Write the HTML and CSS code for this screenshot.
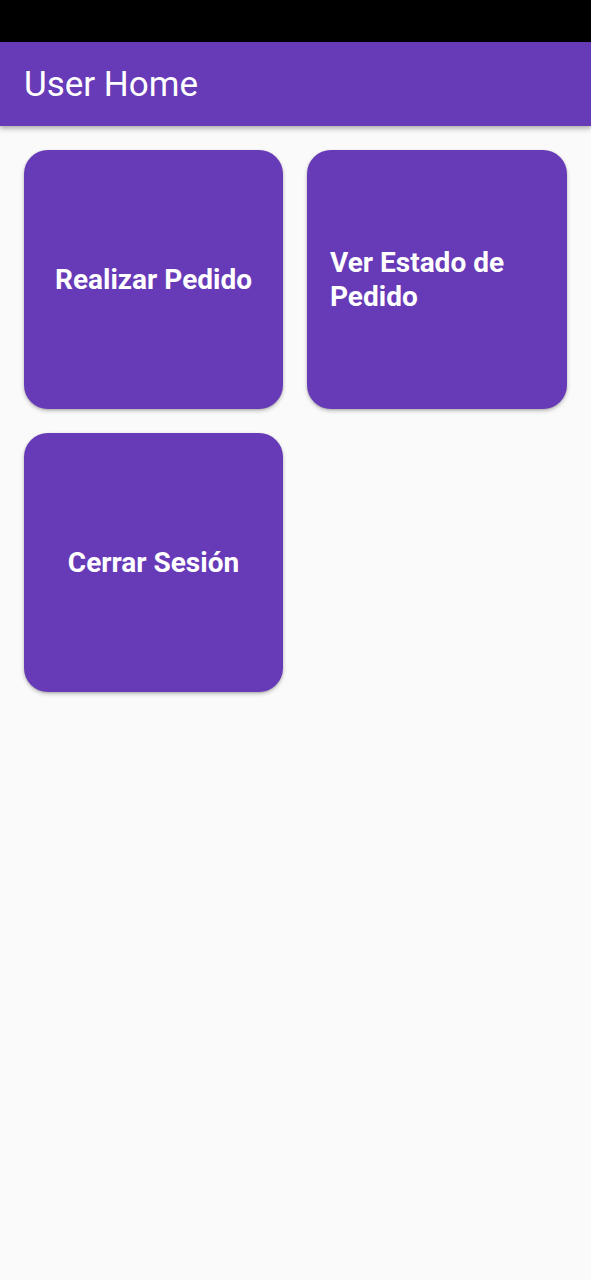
FILE: index.html
```html
<!DOCTYPE html>
<html lang="es">
<head>
<meta charset="utf-8">
<title>User Home</title>
<link rel="stylesheet" href="styles.css">
</head>
<body>
<div class="status-bar"></div>
<header class="app-bar">
  <h1 class="app-title">User Home</h1>
</header>
<main class="grid">
  <div class="card"><span class="card-label">Realizar Pedido</span></div>
  <div class="card"><span class="card-label">Ver Estado de Pedido</span></div>
  <div class="card"><span class="card-label">Cerrar Sesión</span></div>
</main>
</body>
</html>
```
FILE: styles.css
```css
* { box-sizing: border-box; }
html, body {
  margin: 0;
  padding: 0;
  background: #fafafa;
  font-family: Roboto, "Noto Sans", sans-serif;
}
.status-bar {
  height: 42px;
  background: #000;
}
.app-bar {
  height: 84px;
  background: #673ab7;
  display: flex;
  align-items: center;
  padding: 0 24px;
  box-shadow: 0 2px 4px rgba(0,0,0,0.2), 0 4px 5px rgba(0,0,0,0.12);
  position: relative;
  z-index: 1;
}
.app-title {
  margin: 0;
  color: #fff;
  font-size: 35px;
  font-weight: 400;
  line-height: 1;
}
.grid {
  display: grid;
  grid-template-columns: 259px 260px;
  column-gap: 24px;
  row-gap: 24px;
  padding: 24px 24px;
}
.card {
  height: 259px;
  background: #673ab7;
  border-radius: 24px;
  box-shadow: 0 2px 4px rgba(0,0,0,0.22), 0 1px 2px rgba(0,0,0,0.14);
  display: flex;
  align-items: center;
  justify-content: center;
  padding: 0 23px;
}
.card-label {
  color: #fff;
  font-size: 28px;
  font-weight: 700;
  line-height: 34px;
}
```
